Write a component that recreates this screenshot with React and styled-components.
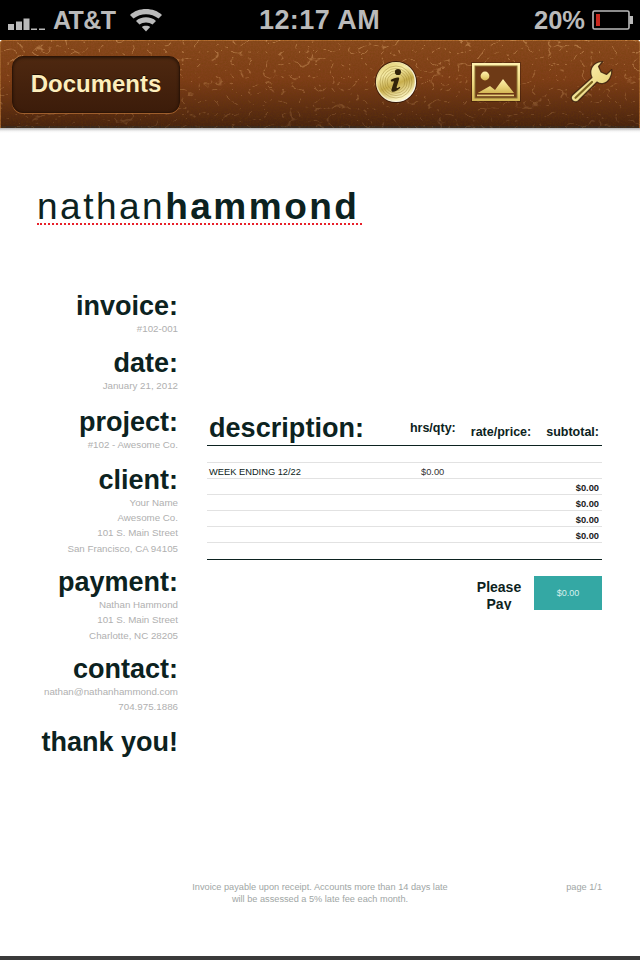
import React from "react";
import styled, { createGlobalStyle } from "styled-components";

const Global = createGlobalStyle`
  html, body { margin: 0; padding: 0; background: #fff; }
  body { font-family: "Liberation Sans", Arial, sans-serif; }
  #root { width: 640px; height: 960px; overflow: hidden; }
`;

const Screen = styled.div`
  width: 640px; height: 960px; display: flex; flex-direction: column; overflow: hidden; background: #fff;
`;

const StatusBar = styled.div`
  height: 40px; flex: none; background: #000; display: flex; align-items: center;
  padding: 0 6px 0 8px; color: #bababa; font-weight: 700;
`;
const StatusLeft = styled.div`display: flex; align-items: center; flex: 1;`;
const Carrier = styled.span`font-size: 25px; margin-left: 7px; margin-right: 15px; line-height: 40px; letter-spacing: -0.6px;`;
const Clock = styled.span`font-size: 27px; line-height: 40px; letter-spacing: 0.45px; margin-left: -3px;`;
const StatusRight = styled.div`display: flex; align-items: center; flex: 1; justify-content: flex-end; gap: 7px;`;
const Percent = styled.span`font-size: 25.5px; line-height: 40px;`;

const Toolbar = styled.div`
  height: 88px; flex: none; position: relative; display: flex; align-items: center;
  padding: 0 26px 0 12px; box-sizing: border-box; overflow: hidden; border-radius: 4px 4px 0 0;
  background: linear-gradient(#8a4a1e 0%, #7f3e18 45%, #5a2c12 82%, #45220f 100%);
  box-shadow: inset 0 1px 0 #b26c30, inset 1px 0 0 #a0602c, inset -1px 0 0 #a0602c, inset 0 -2px 0 #3a2a20;
`;
const Leather = styled.svg`position: absolute; inset: 0; width: 100%; height: 100%;`;
const BackButton = styled.div`
  position: relative; width: 168px; height: 57px; box-sizing: border-box;
  border-radius: 11px; display: flex; align-items: center; justify-content: center;
  background: linear-gradient(#4e2810, #3c1c0a);
  border: 1px solid #2c1406;
  box-shadow: 0 1px 0 rgba(196,122,60,.65), inset 0 1px 3px rgba(0,0,0,.5);
  color: #fdeebc; font-size: 24px; font-weight: 700; text-shadow: 0 -1px 0 rgba(0,0,0,.6);
`;
const ToolIcons = styled.div`position: relative; margin-left: auto; margin-top: -4px; display: flex; align-items: center;`;
const IconSlot = styled.svg`display: block; margin-left: ${p => p.$gap}px; overflow: visible;`;
const ToolbarEdge = styled.div`height: 5px; flex: none; background: linear-gradient(#b4b4b4, #f4f4f4 60%, #fff);`;

const Page = styled.div`
  flex: 1; display: flex; flex-direction: column; padding: 0 38px 0 30px; min-height: 0; color: #0c2220;
`;
const LogoLine = styled.div`margin: 53px 0 0 7px; height: 46px;`;
const Logo = styled.h1`
  display: inline-block; margin: 0; font-size: 37px; line-height: 42px; font-weight: 400; letter-spacing: 2.5px;
  border-bottom: 2px dotted #e8202a; padding-right: 3px; height: 37px; color: #0c2220;
  font-family: "Liberation Sans", sans-serif;
  b { font-weight: 700; }
`;
const Columns = styled.div`display: flex; margin-top: 58px; align-items: flex-start;`;
const Side = styled.aside`width: 148px; flex: none; text-align: right; display: flex; flex-direction: column;`;
const SideHead = styled.h2`margin: ${p => p.$top || 0}px 0 -1px; font-size: 27px; line-height: 32px; font-weight: 700; white-space: nowrap; color: #0c2220;`;
const Meta = styled.div`
  font-size: 9.75px; line-height: 15.3px; color: #b0b0b0; white-space: nowrap;
`;
const Main = styled.section`width: 395px; margin-left: 29px; flex: none; padding-top: 116px;`;
const TableHead = styled.div`
  display: flex; align-items: flex-end; height: 40px; box-sizing: border-box; padding: 0 3px 0 2px;
  border-bottom: 1px solid #0c2220;
`;
const DescTitle = styled.h2`margin: 0; font-size: 27px; line-height: 34px; font-weight: 700; letter-spacing: .05px; flex: 1;`;
const ColHead = styled.span`
  font-size: 12.5px; font-weight: 700; white-space: nowrap; margin-left: ${p => p.$left}px; line-height: 14px; padding-bottom: ${p => p.$up}px;
`;
const Rows = styled.div`margin-top: 16px; border-top: 1px solid #e2e2e2;`;
const Row = styled.div`
  height: 16px; box-sizing: border-box; border-bottom: 1px solid #e2e2e2;
  display: flex; align-items: center; font-size: 9.3px; line-height: 15px; padding: 4px 3px 0 2px;
`;
const RowName = styled.span`width: 212px; color: #0c2220;`;
const RowAmt = styled.span`color: #333;`;
const RowTotal = styled.span`margin-left: auto; font-weight: 700; font-size: 9.3px; color: #1a1a1a;`;
const Rule = styled.div`border-top: 1px solid #0c2220; margin-top: 16px;`;
const PayLine = styled.div`display: flex; justify-content: flex-end; margin-top: 16px; height: 34px;`;
const PayLabel = styled.div`
  width: 70px; height: 34px; overflow: hidden; text-align: center; font-size: 14px; line-height: 17px; font-weight: 700;
  padding-top: 3px; box-sizing: border-box;
`;
const PayBox = styled.div`
  width: 68px; background: #34a8a4; color: #d8f0ee; font-size: 9px; display: flex; align-items: center; justify-content: center;
`;
const Footer = styled.div`
  margin-top: auto; display: flex; height: 75px; font-size: 9.2px; line-height: 12px; color: #a0a6a5;
`;
const FooterNote = styled.p`margin: 0 0 0 159px; width: 262px; text-align: center;`;
const FooterPage = styled.span`margin-left: auto; white-space: nowrap;`;
const BottomStrip = styled.div`height: 4px; flex: none; background: #3a3a3a;`;

function LeatherTexture() {
  return (
    <Leather xmlns="http://www.w3.org/2000/svg">
      <defs>
        <filter id="veins" x="0" y="0" width="100%" height="100%">
          <feTurbulence type="turbulence" baseFrequency="0.06 0.08" numOctaves="2" seed="9" />
          <feColorMatrix type="matrix" values="0 0 0 0 0.85  0 0 0 0 0.48  0 0 0 0 0.2  -16 0 0 0 1.4" />
        </filter>
        <filter id="grain" x="0" y="0" width="100%" height="100%">
          <feTurbulence type="fractalNoise" baseFrequency="0.6" numOctaves="2" seed="4" />
          <feColorMatrix type="matrix" values="0 0 0 0 0.15  0 0 0 0 0.05  0 0 0 0 0  0 0 0 1.4 -0.5" />
        </filter>
        <linearGradient id="veinFade" x1="0" y1="0" x2="0" y2="1">
          <stop offset="0" stopColor="#fff" stopOpacity=".4" />
          <stop offset="1" stopColor="#fff" stopOpacity=".14" />
        </linearGradient>
        <mask id="fade"><rect width="640" height="88" fill="url(#veinFade)" /></mask>
      </defs>
      <rect width="640" height="88" filter="url(#grain)" opacity=".45" />
      <rect width="640" height="88" filter="url(#veins)" mask="url(#fade)" />
    </Leather>
  );
}

const Gold = () => (
  <defs>
    <linearGradient id="gold" x1="0" y1="0" x2="0" y2="1">
      <stop offset="0" stopColor="#fff2b0" />
      <stop offset=".55" stopColor="#ecd77e" />
      <stop offset="1" stopColor="#d4b755" />
    </linearGradient>
    <linearGradient id="wrenchGold" x1="0" y1="0" x2="1" y2="1">
      <stop offset="0" stopColor="#fff6c0" />
      <stop offset=".6" stopColor="#eedc88" />
      <stop offset="1" stopColor="#d8c062" />
    </linearGradient>
    <linearGradient id="coin" x1="0" y1="0" x2=".4" y2="1">
      <stop offset="0" stopColor="#dcc666" />
      <stop offset=".35" stopColor="#f6eba6" />
      <stop offset=".65" stopColor="#c8ae4c" />
      <stop offset="1" stopColor="#fbf3c0" />
    </linearGradient>
    <linearGradient id="rim" x1="0" y1="0" x2="1" y2="1">
      <stop offset="0" stopColor="#e4d27c" />
      <stop offset="1" stopColor="#ffffff" />
    </linearGradient>
  </defs>
);

const SignalIcon = () => (
  <svg width="38" height="14" viewBox="0 0 38 14" fill="#bababa" style={{ marginTop: 6 }}>
    <rect x="0" y="8" width="6" height="6" />
    <rect x="8" y="5.5" width="6" height="8.5" />
    <rect x="15.5" y="2.5" width="6" height="11.5" />
    <rect x="23" y="12.5" width="6" height="1.5" />
    <rect x="31" y="12.5" width="6" height="1.5" />
  </svg>
);

const WifiIcon = () => (
  <svg width="32" height="24" viewBox="0 0 32 24" fill="#bababa" style={{ marginTop: -1 }}>
    <path d="M0 7C8-1 24-1 32 7L28.5 10.5C21 4.8 11 4.8 3.5 10.5Z" />
    <path d="M6 13C11 8 21 8 26 13L22.5 16.5C19 13.8 13 13.8 9.5 16.5Z" />
    <path d="M11.8 19C13.5 17.4 18.5 17.4 20.2 19L16 23.5Z" />
  </svg>
);

const BatteryIcon = () => (
  <svg width="42" height="20" viewBox="0 0 42 20">
    <rect x="1" y="1" width="36" height="18" rx="1.5" fill="none" stroke="#bababa" strokeWidth="1.6" />
    <rect x="37.5" y="6" width="3.5" height="8" fill="#bababa" />
    <rect x="4" y="4" width="4" height="12" fill="#c8281e" />
  </svg>
);

const InfoIcon = () => (
  <IconSlot width="42" height="42" viewBox="0 0 42 42" $gap={0}>
    <circle cx="21" cy="21" r="21" fill="#2a1206" opacity=".8" />
    <circle cx="21" cy="21" r="19.4" fill="url(#coin)" stroke="url(#rim)" strokeWidth="1.4" />
    <g fill="none" stroke="#8e7526" strokeWidth=".7" opacity=".55">
      <circle cx="21" cy="21" r="16" />
      <circle cx="21" cy="21" r="13.6" />
      <circle cx="21" cy="21" r="11.2" />
      <circle cx="21" cy="21" r="8.8" />
    </g>
    <circle cx="23" cy="11" r="3.1" fill="#32240a" />
    <path d="M15.6 19c3-1.8 7-3.2 8.4-2.2 1 .9-2.8 9-2.3 10 .3.6 1.6 0 2.8-1l.9 1c-2.8 2.9-6.8 4.8-8.6 3.6-1.4-1 2.4-9 2-9.9-.3-.5-1.2-.2-2.2.2z" fill="#32240a" />
  </IconSlot>
);

const PictureIcon = () => (
  <IconSlot width="50" height="40" viewBox="0 0 50 40" $gap={54}>
    <rect x="0" y="0" width="50" height="40" fill="#2a1206" opacity=".4" />
    <rect x="1" y="1" width="48" height="38" fill="url(#gold)" />
    <rect x="4" y="4" width="42" height="32" fill="#6e3a16" stroke="#8a7030" strokeWidth="1" />
    <circle cx="14" cy="14" r="4.4" fill="url(#gold)" />
    <path d="M6.7 31L19 24 24 28 32 17 43 31z" fill="url(#gold)" />
    <rect x="6" y="32.6" width="37" height="1.6" fill="#e6cf78" />
  </IconSlot>
);

const WrenchIcon = () => (
  <IconSlot width="44" height="42" viewBox="0 0 44 42" $gap={49}>
    <path d="M32.7.5C26 .5 20.5 5 20.8 12 20.9 14 21.5 15.5 22 16.5L2.5 34C.5 36 1 38.5 3 40 5 41.5 7.5 41 9 39L27 21C29 22.5 31 23 33 22.5 38.5 21.5 42.5 15 41.8 8.5L36.5 13.5 31 11 28.5 5.5Z"
      fill="url(#wrenchGold)" stroke="#2a1206" strokeOpacity=".75" strokeWidth="1.2" strokeLinejoin="round" />
    <path d="M5.5 36.8L22 21" stroke="#7c6420" strokeWidth="2.2" strokeLinecap="round" />
  </IconSlot>
);

export default function App() {
  return (
    <Screen>
      <Global />
      <StatusBar>
        <StatusLeft>
          <SignalIcon />
          <Carrier>AT&amp;T</Carrier>
          <WifiIcon />
        </StatusLeft>
        <Clock>12:17 AM</Clock>
        <StatusRight>
          <Percent>20%</Percent>
          <BatteryIcon />
        </StatusRight>
      </StatusBar>
      <Toolbar>
        <LeatherTexture />
        <BackButton>Documents</BackButton>
        <ToolIcons>
          <svg width="0" height="0" style={{ position: "absolute" }}><Gold /></svg>
          <InfoIcon />
          <PictureIcon />
          <WrenchIcon />
        </ToolIcons>
      </Toolbar>
      <ToolbarEdge />
      <Page>
        <LogoLine><Logo>nathan<b>hammond</b></Logo></LogoLine>
        <Columns>
          <Side>
            <SideHead>invoice:</SideHead>
            <Meta>#102-001</Meta>
            <SideHead $top={11}>date:</SideHead>
            <Meta>January 21, 2012</Meta>
            <SideHead $top={12}>project:</SideHead>
            <Meta>#102 - Awesome Co.</Meta>
            <SideHead $top={12}>client:</SideHead>
            <Meta>Your Name</Meta>
            <Meta>Awesome Co.</Meta>
            <Meta>101 S. Main Street</Meta>
            <Meta>San Francisco, CA 94105</Meta>
            <SideHead $top={10}>payment:</SideHead>
            <Meta>Nathan Hammond</Meta>
            <Meta>101 S. Main Street</Meta>
            <Meta>Charlotte, NC 28205</Meta>
            <SideHead $top={10}>contact:</SideHead>
            <Meta>nathan@nathanhammond.com</Meta>
            <Meta>704.975.1886</Meta>
            <SideHead $top={11}>thank you!</SideHead>
          </Side>
          <Main>
            <TableHead>
              <DescTitle>description:</DescTitle>
              <ColHead $up={10}>hrs/qty:</ColHead>
              <ColHead $left={15} $up={6}>rate/price:</ColHead>
              <ColHead $left={15} $up={6}>subtotal:</ColHead>
            </TableHead>
            <Rows>
              <Row><RowName>WEEK ENDING 12/22</RowName><RowAmt>$0.00</RowAmt></Row>
              <Row><RowTotal>$0.00</RowTotal></Row>
              <Row><RowTotal>$0.00</RowTotal></Row>
              <Row><RowTotal>$0.00</RowTotal></Row>
              <Row><RowTotal>$0.00</RowTotal></Row>
            </Rows>
            <Rule />
            <PayLine>
              <PayLabel>Please Pay</PayLabel>
              <PayBox>$0.00</PayBox>
            </PayLine>
          </Main>
        </Columns>
        <Footer>
          <FooterNote>Invoice payable upon receipt. Accounts more than 14 days late will be assessed a 5% late fee each month.</FooterNote>
          <FooterPage>page 1/1</FooterPage>
        </Footer>
      </Page>
      <BottomStrip />
    </Screen>
  );
}
